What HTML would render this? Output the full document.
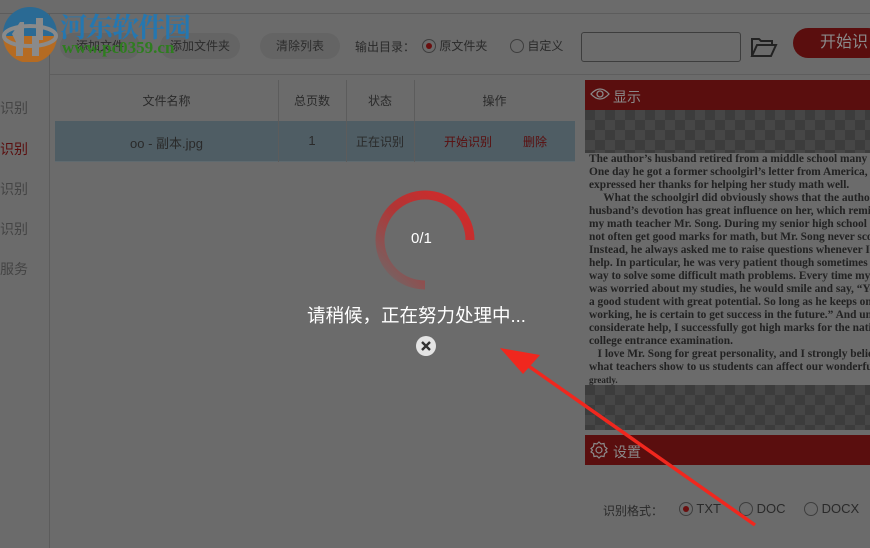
<!DOCTYPE html>
<html><head><meta charset="utf-8"><style>
*{margin:0;padding:0;box-sizing:border-box}
body{width:870px;height:548px;overflow:hidden;background:#6b6b6b;font-family:"Liberation Sans","Noto Sans CJK SC",sans-serif;position:relative;color:#2a2a2a;font-size:12px}
.a{position:absolute;white-space:nowrap}
.btn{position:absolute;top:33px;height:26px;border-radius:13px;background:#646464;font-size:12px;line-height:26px;text-align:center;color:#2c2c2c}
.cb{display:inline-block;width:14px;height:14px;border:1px solid #3e3e3e;border-radius:50%;vertical-align:-3px;position:relative}
.cb.on::after{content:"";position:absolute;left:3px;top:3px;width:6px;height:6px;border-radius:50%;background:#6a0f0f}
.chk{background-color:#3c3c3c;background-image:linear-gradient(45deg,#464646 25%,transparent 25%,transparent 75%,#464646 75%),linear-gradient(45deg,#464646 25%,transparent 25%,transparent 75%,#464646 75%);background-size:20px 20px;background-position:0 0,10px 10px}
.doc{font-family:"Liberation Serif",serif;font-weight:bold;font-size:11.4px;line-height:13px;color:#222;white-space:nowrap}
</style></head><body>
<div class="a" style="left:0;top:13px;width:870px;height:1px;background:#5c5c5c"></div>
<div class="a" style="left:49px;top:13px;width:1px;height:535px;background:#5c5c5c"></div>
<div class="a" style="left:50px;top:74px;width:820px;height:1px;background:#5e5e5e"></div>
<div class="btn" style="left:60px;width:80px">添加文件</div>
<div class="btn" style="left:160px;width:80px;color:#2c2c2c">添加文件夹</div>
<div class="btn" style="left:260px;width:80px">清除列表</div>
<!-- logo -->
<svg class="a" style="left:2px;top:6px" width="56" height="56" viewBox="0 0 56 56">
<circle cx="28" cy="28" r="27" fill="#2a6a94"/><path d="M1 30 A27 27 0 0 0 55 30 Z" fill="#b56b22"/>
<ellipse cx="28" cy="30" rx="26" ry="10" fill="none" stroke="#8a8a8a" stroke-width="4"/>
<rect x="14" y="30" width="7" height="20" fill="#8a8a8a"/><rect x="30" y="30" width="7" height="20" fill="#8a8a8a"/>
<path d="M10 28 L18 16 L22 16 L22 40 L16 40 Z" fill="#8a8a8a"/><rect x="34" y="12" width="7" height="22" fill="#8a8a8a"/>
</svg>
<div class="a" style="left:60px;top:6px;font-size:27px;font-weight:bold;color:#2577b0;font-family:'Noto Serif CJK SC',serif;letter-spacing:-1px">河东软件园</div>
<div class="a" style="left:62px;top:38px;font-size:17px;font-weight:bold;color:#2e7d1f;font-family:'Liberation Serif',serif">www.pc0359.cn</div>
<div class="a" style="left:355px;top:38px">输出目录：</div>
<div class="a" style="left:422px;top:37px"><span class="cb on"></span> 原文件夹</div>
<div class="a" style="left:510px;top:37px"><span class="cb"></span> 自定义</div>
<div class="a" style="left:581px;top:32px;width:160px;height:30px;border:1px solid #3d3d3d;border-radius:3px"></div>
<svg class="a" style="left:750px;top:36px" width="28" height="22" viewBox="0 0 28 22"><path d="M2 20 V3 H9 L11 5 H22 V9 M2 20 L7 9 H26 L21 20 Z" fill="none" stroke="#222" stroke-width="2"/></svg>
<div class="a" style="left:793px;top:28px;width:90px;height:30px;border-radius:15px;background:#5a0e0e;color:#8a8a8a;font-size:16px;line-height:30px;padding-left:27px">开始识</div>
<!-- sidebar -->
<div class="a" style="left:0;top:98px;font-size:14px;color:#444">识别</div>
<div class="a" style="left:0;top:139px;font-size:14px;color:#5a0e0e">识别</div>
<div class="a" style="left:0;top:179px;font-size:14px;color:#444">识别</div>
<div class="a" style="left:0;top:219px;font-size:14px;color:#444">识别</div>
<div class="a" style="left:0;top:259px;font-size:14px;color:#444">服务</div>
<!-- table -->
<div class="a" style="left:55px;top:121px;width:520px;height:41px;background:#4f5d64"></div>
<div class="a" style="left:55px;top:161px;width:520px;height:1px;background:#5f6a6f"></div>
<div class="a" style="left:278px;top:80px;width:1px;height:82px;background:#5c5c5c"></div>
<div class="a" style="left:346px;top:80px;width:1px;height:82px;background:#5c5c5c"></div>
<div class="a" style="left:414px;top:80px;width:1px;height:82px;background:#5c5c5c"></div>
<div class="a" style="left:55px;top:92px;width:223px;text-align:center">文件名称</div>
<div class="a" style="left:278px;top:92px;width:68px;text-align:center">总页数</div>
<div class="a" style="left:346px;top:92px;width:68px;text-align:center">状态</div>
<div class="a" style="left:414px;top:92px;width:161px;text-align:center">操作</div>
<div class="a" style="left:55px;top:133px;width:223px;text-align:center;font-size:13px">oo - 副本.jpg</div>
<div class="a" style="left:278px;top:133px;width:68px;text-align:center;font-size:13px">1</div>
<div class="a" style="left:346px;top:133px;width:68px;text-align:center">正在识别</div>
<div class="a" style="left:444px;top:133px;color:#5a0e0e">开始识别</div>
<div class="a" style="left:523px;top:133px;color:#5a0e0e">删除</div>
<!-- right panel -->
<div class="a" style="left:585px;top:80px;width:285px;height:30px;background:#5a0e0e"></div>
<svg class="a" style="left:590px;top:87px" width="20" height="14" viewBox="0 0 20 14"><path d="M1 7 Q10 -3 19 7 Q10 17 1 7 Z" fill="none" stroke="#8a8a8a" stroke-width="1.3"/><circle cx="10" cy="7" r="3" fill="none" stroke="#8a8a8a" stroke-width="1.3"/></svg>
<div class="a" style="left:613px;top:87px;font-size:14px;color:#8a8a8a">显示</div>
<div class="a chk" style="left:585px;top:110px;width:285px;height:43px"></div>
<div class="a" style="left:585px;top:153px;width:285px;height:232px;background:#6b6b6b"></div>
<div class="a doc" style="left:589px;top:153px">The author’s husband retired from a middle school many years<br>One day he got a former schoolgirl’s letter from America, which<br>expressed her thanks for helping her study math well.<br>&nbsp;&nbsp;&nbsp;&nbsp;&nbsp;What the schoolgirl did obviously shows that the author’s<br>husband’s devotion has great influence on her, which reminds<br>my math teacher Mr. Song. During my senior high school days<br>not often get good marks for math, but Mr. Song never scolded<br>Instead, he always asked me to raise questions whenever I need<br>help. In particular, he was very patient though sometimes I had<br>way to solve some difficult math problems. Every time my mo<br>was worried about my studies, he would smile and say, “Your<br>a good student with great potential. So long as he keeps on ha<br>working, he is certain to get success in the future.” And under<br>considerate help, I successfully got high marks for the national<br>college entrance examination.<br>&nbsp;&nbsp;&nbsp;I love Mr. Song for great personality, and I strongly believe<br>what teachers show to us students can affect our wonderful fu<br><span style="font-size:9px">greatly.</span></div>
<div class="a chk" style="left:585px;top:385px;width:285px;height:45px"></div>
<div class="a" style="left:585px;top:435px;width:285px;height:30px;background:#5a0e0e"></div>
<svg class="a" style="left:590px;top:441px" width="18" height="18" viewBox="0 0 18 18"><circle cx="9" cy="9" r="3" fill="none" stroke="#8a8a8a" stroke-width="1.2"/><path d="M9 1 L11 3 L14 2.5 L14.5 5.5 L17 7.5 L15.5 9 L17 11 L14.5 12.5 L14 15.5 L11 15 L9 17 L7 15 L4 15.5 L3.5 12.5 L1 11 L2.5 9 L1 7.5 L3.5 5.5 L4 2.5 L7 3 Z" fill="none" stroke="#8a8a8a" stroke-width="1.2"/></svg>
<div class="a" style="left:613px;top:442px;font-size:14px;color:#8a8a8a">设置</div>
<div class="a" style="left:603px;top:502px">识别格式：</div>
<div class="a" style="left:679px;top:501px;font-size:13px"><span class="cb on"></span> TXT</div>
<div class="a" style="left:739px;top:501px;font-size:13px"><span class="cb"></span> DOC</div>
<div class="a" style="left:804px;top:501px;font-size:13px"><span class="cb"></span> DOCX</div>
<!-- overlay spinner -->
<svg class="a" style="left:370px;top:185px" width="110" height="110" viewBox="0 0 110 110">
<defs><linearGradient id="g" x1="0" y1="1" x2="1" y2="0"><stop offset="0" stop-color="#6b6b6b"/><stop offset="0.5" stop-color="#b13535"/><stop offset="1" stop-color="#d82828"/></linearGradient></defs>
<path d="M55 100 A45 45 0 1 1 100 55" fill="none" stroke="url(#g)" stroke-width="9"/>
</svg>
<div class="a" style="left:411px;top:230px;color:#fff;font-size:15px">0/1</div>
<div class="a" style="left:307px;top:302px;color:#fff;font-size:18.5px">请稍候，正在努力处理中...</div>
<svg class="a" style="left:415px;top:335px" width="22" height="22" viewBox="0 0 22 22"><circle cx="11" cy="11" r="10" fill="#e4e4e4"/><path d="M7 7 L15 15 M15 7 L7 15" stroke="#333" stroke-width="2.4"/></svg>
<!-- arrow -->
<svg class="a" style="left:0;top:0" width="870" height="548"><line x1="755" y1="525" x2="520" y2="360" stroke="#f0271e" stroke-width="3.5"/><path d="M500 348 L540 355 L523 374 Z" fill="#f0271e"/></svg>
</body></html>
